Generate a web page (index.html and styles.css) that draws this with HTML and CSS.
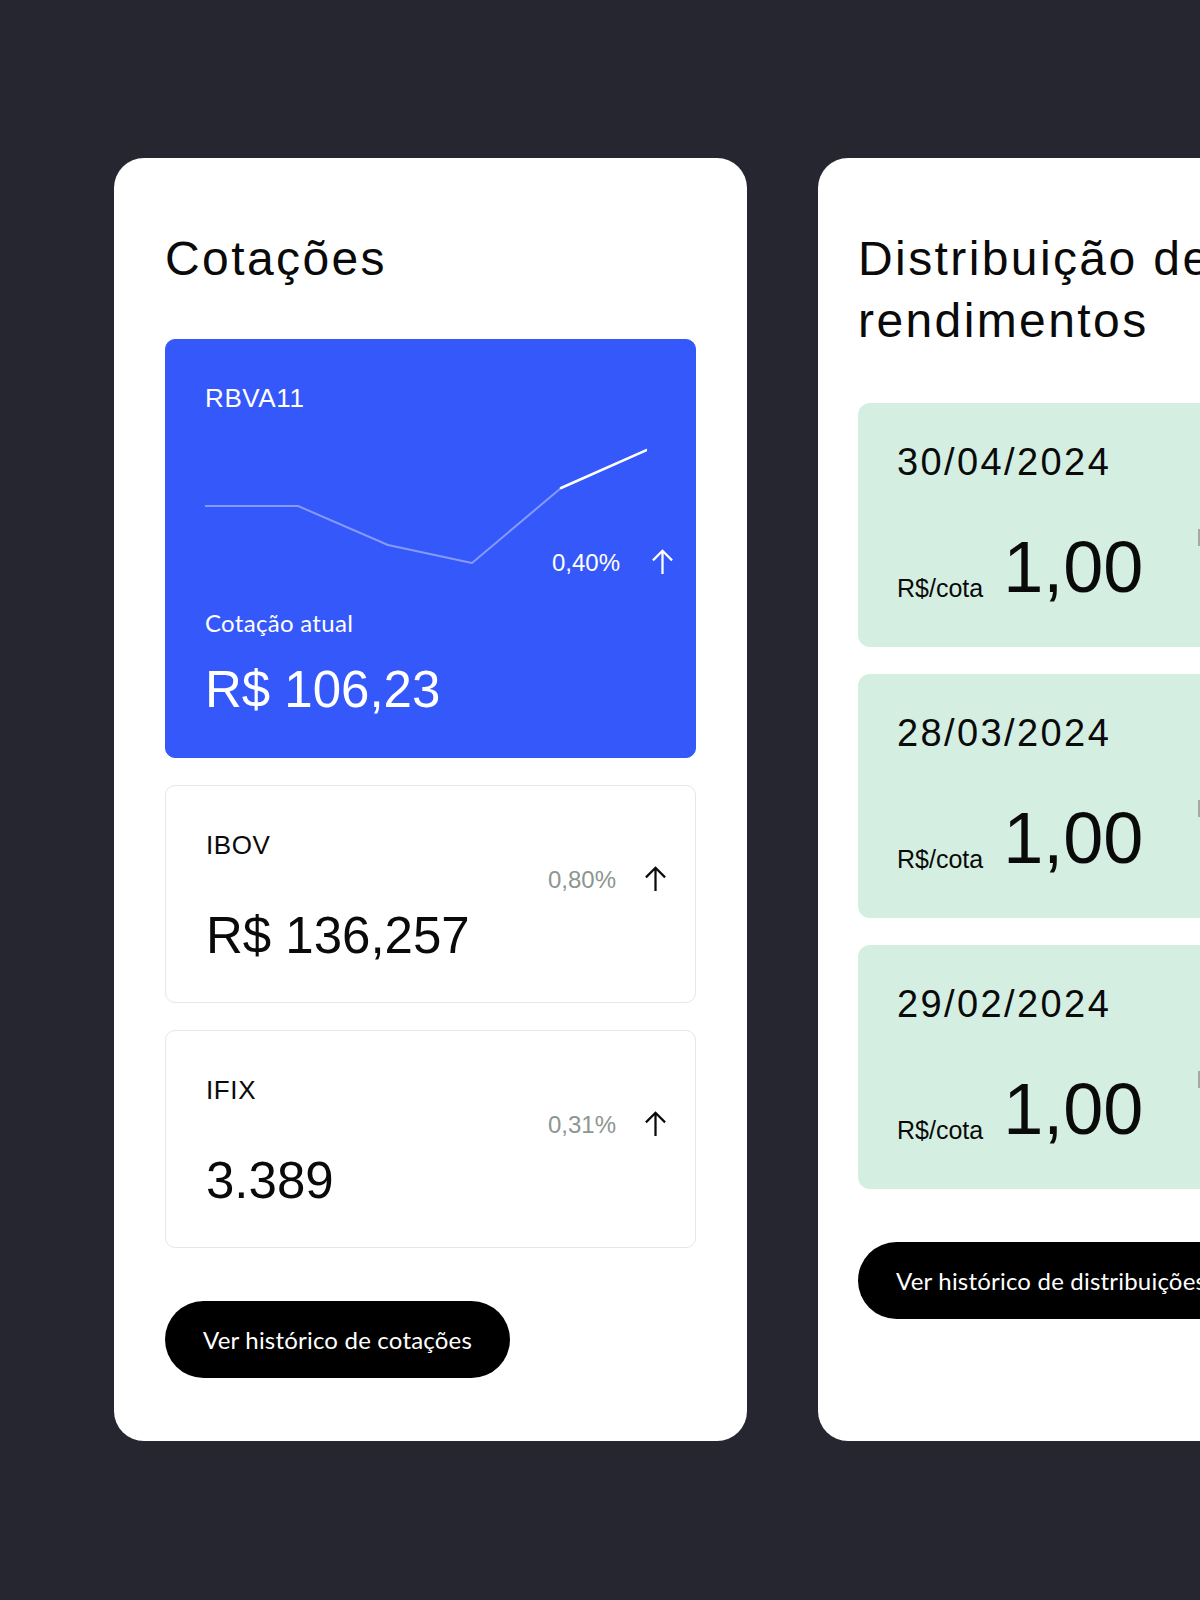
FILE: index.html
```html
<!DOCTYPE html>
<html lang="pt-BR">
<head>
    <meta charset="UTF-8">
    <meta name="viewport" content="width=device-width, initial-scale=1.0">
    <title>Cotações e rendimentos</title>
    <link rel="stylesheet" href="styles.css">
</head>
<body>
    <div class="page">
        <section class="panel panel-quotes">
            <h2 class="panel-title">Cotações</h2>

            <div class="quote quote-main">
                <div class="quote-name">RBVA11</div>
                <div class="chart">
                    <svg class="chart-line" width="442" height="140" viewBox="0 0 442 140">
                        <polyline points="0,67 93,67 183,106 267,124 356,49" fill="none" stroke="rgba(255,255,255,0.4)" stroke-width="2" stroke-linejoin="round"/>
                        <polyline points="356,49 442,11" fill="none" stroke="#fff" stroke-width="2.5" stroke-linecap="round"/>
                    </svg>
                    <div class="change">
                        <span>0,40%</span>
                        <svg class="arrow" width="27" height="27" viewBox="0 0 24 24"><path d="M12 23V2.5M3.5 11l8.5-8.5 8.5 8.5" fill="none" stroke="currentColor" stroke-width="2"/></svg>
                    </div>
                </div>
                <div class="quote-label">Cotação atual</div>
                <div class="quote-value">R$ 106,23</div>
            </div>

            <div class="quote">
                <div class="quote-name">IBOV</div>
                <div class="change change-muted">
                    <span>0,80%</span>
                    <svg class="arrow" width="27" height="27" viewBox="0 0 24 24"><path d="M12 23V2.5M3.5 11l8.5-8.5 8.5 8.5" fill="none" stroke="currentColor" stroke-width="2"/></svg>
                </div>
                <div class="quote-value">R$ 136,257</div>
            </div>

            <div class="quote">
                <div class="quote-name">IFIX</div>
                <div class="change change-muted">
                    <span>0,31%</span>
                    <svg class="arrow" width="27" height="27" viewBox="0 0 24 24"><path d="M12 23V2.5M3.5 11l8.5-8.5 8.5 8.5" fill="none" stroke="currentColor" stroke-width="2"/></svg>
                </div>
                <div class="quote-value">3.389</div>
            </div>

            <button class="btn">Ver histórico de cotações</button>
        </section>

        <section class="panel panel-income">
            <h2 class="panel-title">Distribuição de rendimentos</h2>

            <div class="income">
                <div class="income-date">30/04/2024</div>
                <div class="income-row">
                    <span class="income-unit">R$/cota</span>
                    <span class="income-value">1,00</span>
                    <span class="income-mark"></span>
                </div>
            </div>
            <div class="income">
                <div class="income-date">28/03/2024</div>
                <div class="income-row">
                    <span class="income-unit">R$/cota</span>
                    <span class="income-value">1,00</span>
                    <span class="income-mark"></span>
                </div>
            </div>
            <div class="income">
                <div class="income-date">29/02/2024</div>
                <div class="income-row">
                    <span class="income-unit">R$/cota</span>
                    <span class="income-value">1,00</span>
                    <span class="income-mark"></span>
                </div>
            </div>

            <button class="btn">Ver histórico de distribuições</button>
        </section>
    </div>
</body>
</html>
```

FILE: styles.css
```css
* { box-sizing: border-box; }
body { margin: 0; background: #262630; font-family: "Liberation Sans", Arial, sans-serif; color: #0a0a0a; overflow: hidden; }
.page { display: flex; gap: 71px; padding: 158px 0 0 114px; width: 1200px; height: 1600px; overflow: hidden; }

.panel { flex-shrink: 0; width: 633px; height: 1283px; background: #fff; border-radius: 30px; padding: 70px 51px 0; }
.panel-income { padding: 70px 40px 0; }
.panel-title { margin: 0 0 49px; font-size: 48px; font-weight: normal; line-height: 1.3; letter-spacing: 2.4px; }
.panel-income .panel-title { margin-bottom: 50px; }

/* quotes */
.quote { border: 1px solid #e4e6ea; border-radius: 10px; padding: 45px 26px 36px 40px; margin-bottom: 27px; display: flex; flex-direction: column; }
.quote-main { background: #3558fb; border-color: #3558fb; color: #fff; padding: 44px 19px 36px 39px; }
.quote-name { font-size: 26px; line-height: 1.2; letter-spacing: 0.6px; margin-top: -1px; }
.quote-value { font-size: 51px; line-height: 1.2; }
.quote .change { margin: 5px 0 10px; }
.quote-main .quote-value { margin-top: 22px; }
.quote-label { font-family: Lato, "Liberation Sans", sans-serif; font-size: 24px; line-height: 1.2; letter-spacing: 0.3px; margin-top: 30px; }

.chart { position: relative; height: 140px; margin-top: 24px; }
.chart-line { display: block; }
.change { display: flex; align-items: center; justify-content: flex-end; gap: 29px; font-size: 24px; line-height: 1.2; }
.chart .change { position: absolute; right: 0; bottom: 1px; margin: 0; }
.change-muted { color: #8c9691; gap: 26px; }
.change-muted .arrow { color: #0a0a0a; }
.arrow { display: block; margin-top: -3px; }

/* income */
.income { background: #d4efe2; border-radius: 12px; padding: 37px 0 43px 39px; margin-bottom: 27px; height: 244px; }
.income-date { font-size: 38px; letter-spacing: 2.4px; line-height: 1.2; }
.income-row { display: flex; align-items: flex-end; margin-top: 46px; white-space: nowrap; }
.income-unit { font-size: 25px; line-height: 1.2; margin-right: 20px; }
.income-value { font-size: 72px; line-height: 1; }
.income-mark { align-self: flex-start; width: 4px; height: 17px; margin: -2px 0 0 55px; background: #a4a8a6; }

.btn { display: inline-flex; align-items: center; height: 77px; margin-top: 26px; padding: 0 38px; border: none; border-radius: 40px; background: #000; color: #fff; font-family: Lato, "Liberation Sans", sans-serif; font-size: 24px; letter-spacing: 0.2px; cursor: pointer; white-space: nowrap; }
```
